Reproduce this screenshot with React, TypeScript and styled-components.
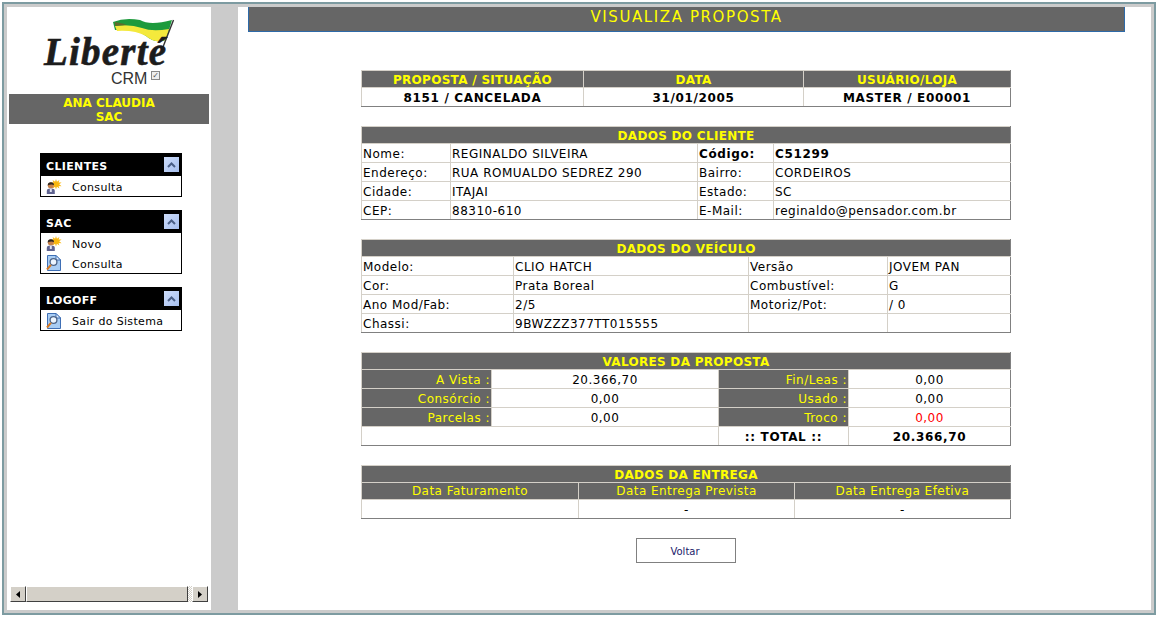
import React from "react";
import styled, { createGlobalStyle } from "styled-components";

const GlobalStyle = createGlobalStyle`
    html, body {
        margin: 0;
        padding: 0;
        background: #fff;
    }
`;

const UserStar = () => (
    <svg width="16" height="15" viewBox="0 0 16 15">
        <path
            d="M10 0 L10.9 2.8 L13.4 .9 L12.6 3.6 L15.6 3.4 L13.2 5.2 L15.6 7.2 L12.6 6.9 L13.4 9.6 L10.9 7.7 L10 10.4 L9.1 7.7 L6.6 9.6 L7.4 6.9 L4.4 7.2 L6.8 5.2 L4.4 3.4 L7.4 3.6 L6.6 .9 L9.1 2.8 Z"
            fill="#f9b70f"
        />
        <circle cx="4.8" cy="6.6" r="3" fill="#c8814a" />
        <path d="M1.6 6.4 Q2 3 5 3.2 Q8 3.4 8 6 Q5.5 4.6 1.6 6.4 Z" fill="#2e2620" />
        <path d="M.8 15 V12 Q.8 9.6 4.8 9.6 Q8.8 9.6 8.8 12 V15 Z" fill="#5f6390" />
        <path d="M3.8 9.6 H5.8 V13 H3.8 Z" fill="#dfe2f2" />
    </svg>
);

const DocSearch = () => (
    <svg width="15" height="16" viewBox="0 0 15 16">
        <path d="M1.5 .5 H10 L14.5 5 V15.5 H1.5 Z" fill="#a9cdf4" stroke="#3f6fb5" />
        <path d="M10 .5 V5 H14.5 Z" fill="#e8f2fc" stroke="#3f6fb5" />
        <circle cx="7.5" cy="7" r="3.4" fill="#eef6ff" stroke="#4d6488" strokeWidth="1.3" />
        <path d="M5 9.8 L1 14.5" stroke="#d9791f" strokeWidth="2" />
    </svg>
);

const Chevron = () => (
    <svg width="9" height="6" viewBox="0 0 9 6">
        <path d="M1 5 L4.5 1.5 L8 5" fill="none" stroke="#4a5f86" strokeWidth="2" />
    </svg>
);

const Arrow = ({ dir }: { dir: "left" | "right" }) => (
    <svg width="4" height="7" viewBox="0 0 4 7">
        <path d={dir === "left" ? "M4 0 V7 L0 3.5 Z" : "M0 0 V7 L4 3.5 Z"} fill="#000" />
    </svg>
);

const menus = [
    { title: "CLIENTES", items: [{ label: "Consulta", icon: <UserStar /> }] },
    {
        title: "SAC",
        items: [
            { label: "Novo", icon: <UserStar /> },
            { label: "Consulta", icon: <DocSearch /> },
        ],
    },
    { title: "LOGOFF", items: [{ label: "Sair do Sistema", icon: <DocSearch /> }] },
];

export default function App() {
    return (
        <Page>
            <GlobalStyle />
            <Frame>
                <Sidebar>
                    <Logo>
                        <Flag viewBox="0 0 62 30">
                            <path d="M0 4 Q12 -1 27 2 Q37 8 59 2 L53 22 Q42 26 33 18 Q22 10 2 12 Z" fill="#1d9a3c" />
                            <path d="M2 8 Q17 6 29 10 Q39 14 56 11 L53 22 Q42 26 33 18 Q22 12 4 13 Z" fill="#f4e93c" />
                            <path d="M2 4 Q8 5 14 7 L2 8 Z" fill="#5f6b2a" />
                            <path d="M60.5 2 L50 29" stroke="#333" strokeWidth="1.4" />
                        </Flag>
                        <Brand>Liberté</Brand>
                        <Crm>
                            CRM
                            <CheckBox>✓</CheckBox>
                        </Crm>
                    </Logo>
                    <UserBar>
                        ANA CLAUDIA
                        <br />
                        SAC
                    </UserBar>
                    <Menus>
                        {menus.map((menu) => (
                            <Menu key={menu.title}>
                                <MenuTitle>
                                    {menu.title}
                                    <Collapse>
                                        <Chevron />
                                    </Collapse>
                                </MenuTitle>
                                <MenuBody>
                                    {menu.items.map((item) => (
                                        <MenuItem key={item.label}>
                                            <MenuIcon>{item.icon}</MenuIcon>
                                            {item.label}
                                        </MenuItem>
                                    ))}
                                </MenuBody>
                            </Menu>
                        ))}
                    </Menus>
                    <ScrollBar>
                        <ScrollButton>
                            <Arrow dir="left" />
                        </ScrollButton>
                        <ScrollThumb />
                        <ScrollTrack />
                        <ScrollButton>
                            <Arrow dir="right" />
                        </ScrollButton>
                    </ScrollBar>
                </Sidebar>
                <Divider />
                <Content>
                    <PageTitle>VISUALIZA PROPOSTA</PageTitle>
                    <Sections>
                        <Table>
                            <colgroup>
                                <col width="222" />
                                <col width="220" />
                                <col width="207" />
                            </colgroup>
                            <tbody>
                                <tr>
                                    <Head>PROPOSTA / SITUAÇÃO</Head>
                                    <Head>DATA</Head>
                                    <Head>USUÁRIO/LOJA</Head>
                                </tr>
                                <tr>
                                    <Cell $align="center" $bold>8151 / CANCELADA</Cell>
                                    <Cell $align="center" $bold>31/01/2005</Cell>
                                    <Cell $align="center" $bold>MASTER / E00001</Cell>
                                </tr>
                            </tbody>
                        </Table>

                        <Table>
                            <colgroup>
                                <col width="89" />
                                <col width="247" />
                                <col width="76" />
                                <col width="237" />
                            </colgroup>
                            <tbody>
                                <tr>
                                    <Head colSpan={4}>DADOS DO CLIENTE</Head>
                                </tr>
                                <tr>
                                    <Cell>Nome:</Cell>
                                    <Cell>REGINALDO SILVEIRA</Cell>
                                    <Cell $bold>Código:</Cell>
                                    <Cell $bold>C51299</Cell>
                                </tr>
                                <tr>
                                    <Cell>Endereço:</Cell>
                                    <Cell>RUA ROMUALDO SEDREZ 290</Cell>
                                    <Cell>Bairro:</Cell>
                                    <Cell>CORDEIROS</Cell>
                                </tr>
                                <tr>
                                    <Cell>Cidade:</Cell>
                                    <Cell>ITAJAI</Cell>
                                    <Cell>Estado:</Cell>
                                    <Cell>SC</Cell>
                                </tr>
                                <tr>
                                    <Cell>CEP:</Cell>
                                    <Cell>88310-610</Cell>
                                    <Cell>E-Mail:</Cell>
                                    <Cell>reginaldo@pensador.com.br</Cell>
                                </tr>
                            </tbody>
                        </Table>

                        <Table>
                            <colgroup>
                                <col width="152" />
                                <col width="235" />
                                <col width="139" />
                                <col width="123" />
                            </colgroup>
                            <tbody>
                                <tr>
                                    <Head colSpan={4}>DADOS DO VEÍCULO</Head>
                                </tr>
                                <tr>
                                    <Cell>Modelo:</Cell>
                                    <Cell>CLIO HATCH</Cell>
                                    <Cell>Versão</Cell>
                                    <Cell>JOVEM PAN</Cell>
                                </tr>
                                <tr>
                                    <Cell>Cor:</Cell>
                                    <Cell>Prata Boreal</Cell>
                                    <Cell>Combustível:</Cell>
                                    <Cell>G</Cell>
                                </tr>
                                <tr>
                                    <Cell>Ano Mod/Fab:</Cell>
                                    <Cell>2/5</Cell>
                                    <Cell>Motoriz/Pot:</Cell>
                                    <Cell>/ 0</Cell>
                                </tr>
                                <tr>
                                    <Cell>Chassi:</Cell>
                                    <Cell>9BWZZZ377TT015555</Cell>
                                    <Cell />
                                    <Cell />
                                </tr>
                            </tbody>
                        </Table>

                        <Table>
                            <colgroup>
                                <col width="130" />
                                <col width="227" />
                                <col width="130" />
                                <col width="162" />
                            </colgroup>
                            <tbody>
                                <tr>
                                    <Head colSpan={4}>VALORES DA PROPOSTA</Head>
                                </tr>
                                <tr>
                                    <Label>A Vista :</Label>
                                    <Cell $align="center">20.366,70</Cell>
                                    <Label>Fin/Leas :</Label>
                                    <Cell $align="center">0,00</Cell>
                                </tr>
                                <tr>
                                    <Label>Consórcio :</Label>
                                    <Cell $align="center">0,00</Cell>
                                    <Label>Usado :</Label>
                                    <Cell $align="center">0,00</Cell>
                                </tr>
                                <tr>
                                    <Label>Parcelas :</Label>
                                    <Cell $align="center">0,00</Cell>
                                    <Label>Troco :</Label>
                                    <Cell $align="center" $red>0,00</Cell>
                                </tr>
                                <tr>
                                    <Cell colSpan={2} />
                                    <Cell $align="center" $bold>:: TOTAL ::</Cell>
                                    <Cell $align="center" $bold>20.366,70</Cell>
                                </tr>
                            </tbody>
                        </Table>

                        <Table>
                            <colgroup>
                                <col width="217" />
                                <col width="216" />
                                <col width="216" />
                            </colgroup>
                            <tbody>
                                <tr>
                                    <Head colSpan={3}>DADOS DA ENTREGA</Head>
                                </tr>
                                <tr>
                                    <SubHead>Data Faturamento</SubHead>
                                    <SubHead>Data Entrega Prevista</SubHead>
                                    <SubHead>Data Entrega Efetiva</SubHead>
                                </tr>
                                <tr>
                                    <Cell />
                                    <Cell $align="center">-</Cell>
                                    <Cell $align="center">-</Cell>
                                </tr>
                            </tbody>
                        </Table>
                    </Sections>
                    <BackButton>Voltar</BackButton>
                </Content>
            </Frame>
        </Page>
    );
}

const Page = styled.div`
    width: 1158px;
    height: 617px;
    padding: 2px;
    box-sizing: border-box;
    background: #fff;
    font-family: "DejaVu Sans", Verdana, sans-serif;
`;

const Frame = styled.div`
    height: 100%;
    box-sizing: border-box;
    display: flex;
    border: 2px solid #7d9ba1;
    background: #cbcbcb;
    padding: 3px;
`;

const Sidebar = styled.div`
    width: 204px;
    flex: none;
    background: #fff;
    display: flex;
    flex-direction: column;
    padding-bottom: 8px;
    box-sizing: border-box;
`;

const Logo = styled.div`
    height: 87px;
    position: relative;
    flex: none;
`;

const Flag = styled.svg`
    position: absolute;
    left: 106px;
    top: 11px;
    width: 62px;
    height: 30px;
`;

const Brand = styled.div`
    position: absolute;
    left: 37px;
    top: 29px;
    font: italic bold 39px/32px "Liberation Serif", serif;
    letter-spacing: 1.2px;
    color: #1c1c1c;
    -webkit-text-stroke: 0.6px #1c1c1c;
`;

const Crm = styled.div`
    position: absolute;
    left: 104px;
    top: 64px;
    font: 16px/16px "Liberation Sans", sans-serif;
    color: #333;
`;

const CheckBox = styled.span`
    position: absolute;
    left: 40px;
    top: 0;
    width: 7px;
    height: 7px;
    border: 1px solid #888;
    background: #eee;
    font: 8px/7px "DejaVu Sans", sans-serif;
    text-align: center;
    color: #555;
`;

const UserBar = styled.div`
    flex: none;
    margin: 0 2px;
    height: 30px;
    background: #666;
    color: #ff0;
    font-size: 12px;
    font-weight: bold;
    line-height: 14px;
    text-align: center;
    padding-top: 2px;
    box-sizing: border-box;
`;

const Menus = styled.div`
    flex: 1;
    display: flex;
    flex-direction: column;
    gap: 13px;
    padding: 29px 0 0 33px;
`;

const Menu = styled.div`
    width: 142px;
    box-sizing: border-box;
    border: 1px solid #000;
    background: #fff;
`;

const MenuTitle = styled.div`
    height: 22px;
    background: #000;
    color: #fff;
    font-size: 11px;
    font-weight: bold;
    line-height: 25px;
    letter-spacing: 0.35px;
    padding-left: 5px;
    position: relative;
`;

const Collapse = styled.span`
    position: absolute;
    right: 2px;
    top: 3px;
    width: 15px;
    height: 15px;
    background: linear-gradient(135deg, #cddcfa, #a6bfee);
    display: flex;
    align-items: center;
    justify-content: center;
`;

const MenuBody = styled.div`
    padding-top: 1px;
`;

const MenuItem = styled.div`
    height: 20px;
    box-sizing: border-box;
    padding: 2px 0 0 5px;
    display: flex;
    align-items: center;
    font-size: 11px;
    letter-spacing: 0.33px;
    color: #000;
    &:first-child {
        height: 19px;
    }
`;

const MenuIcon = styled.span`
    width: 26px;
    margin-top: -2px;
    display: flex;
    flex: none;
`;

const ScrollBar = styled.div`
    flex: none;
    height: 16px;
    margin: 0 3px;
    display: flex;
`;

const ScrollButton = styled.div`
    width: 16px;
    height: 16px;
    flex: none;
    box-sizing: border-box;
    background: #d4d0c8;
    border: 1px solid;
    border-color: #fff #404040 #404040 #fff;
    display: flex;
    align-items: center;
    justify-content: center;
`;

const ScrollThumb = styled.div`
    flex: 1;
    box-sizing: border-box;
    background: #d4d0c8;
    border: 1px solid;
    border-color: #fff #404040 #404040 #fff;
`;

const ScrollTrack = styled.div`
    width: 4px;
    flex: none;
    background: repeating-conic-gradient(#d4d0c8 0 25%, #fff 0 50%) 0 0 / 2px 2px;
`;

const Divider = styled.div`
    width: 27px;
    flex: none;
`;

const Content = styled.div`
    flex: 1;
    background: #fff;
    display: flex;
    flex-direction: column;
    align-items: flex-start;
`;

const PageTitle = styled.div`
    width: 877px;
    height: 25px;
    box-sizing: border-box;
    margin-left: 10px;
    background: #666;
    border: 1px solid #2e6aa8;
    border-top: 0;
    color: #ff0;
    font-size: 15px;
    line-height: 20px;
    text-align: center;
    letter-spacing: 1.6px;
`;

const Sections = styled.div`
    width: 650px;
    margin: 38px 0 0 123px;
    display: flex;
    flex-direction: column;
    gap: 19px;
`;

const Table = styled.table`
    width: 649px;
    table-layout: fixed;
    border-collapse: collapse;
    font-size: 12px;
    letter-spacing: 0.5px;

    tr:last-child td {
        border-bottom-color: #808080;
    }
    td:last-child,
    th:last-child {
        border-right-color: #808080;
    }
`;

const Head = styled.th`
    height: 14px;
    padding: 2px 0 0;
    background: #666;
    color: #ff0;
    font-size: 12px;
    line-height: 14px;
    font-weight: bold;
    text-align: center;
    border: 1px solid #d4d0c8;
    letter-spacing: 0.3px;
`;

const SubHead = styled(Head)`
    height: 16px;
    padding: 0;
    line-height: 16px;
    font-weight: normal;
    letter-spacing: 0.45px;
`;

const Cell = styled.td<{ $align?: string; $bold?: boolean; $red?: boolean }>`
    height: 16px;
    padding: 2px 1px 0;
    text-align: ${({ $align }) => $align || "left"};
    font-weight: ${({ $bold }) => ($bold ? "bold" : "normal")};
    letter-spacing: ${({ $bold }) => ($bold ? "0.65px" : "0.5px")};
    color: ${({ $red }) => ($red ? "#f00" : "#000")};
    border: 1px solid #d4d0c8;
    line-height: 16px;
    white-space: nowrap;
`;

const Label = styled.td`
    height: 16px;
    padding: 2px 1px 0;
    background: #666;
    color: #ff0;
    text-align: right;
    border: 1px solid #d4d0c8;
    line-height: 16px;
`;

const BackButton = styled.button`
    width: 100px;
    height: 25px;
    margin: 19px 0 0 398px;
    background: #fff;
    border: 1px solid #808080;
    color: #1a1a6a;
    font: 10px "DejaVu Sans", Verdana, sans-serif;
    padding: 1px 2px 0 0;
`;
